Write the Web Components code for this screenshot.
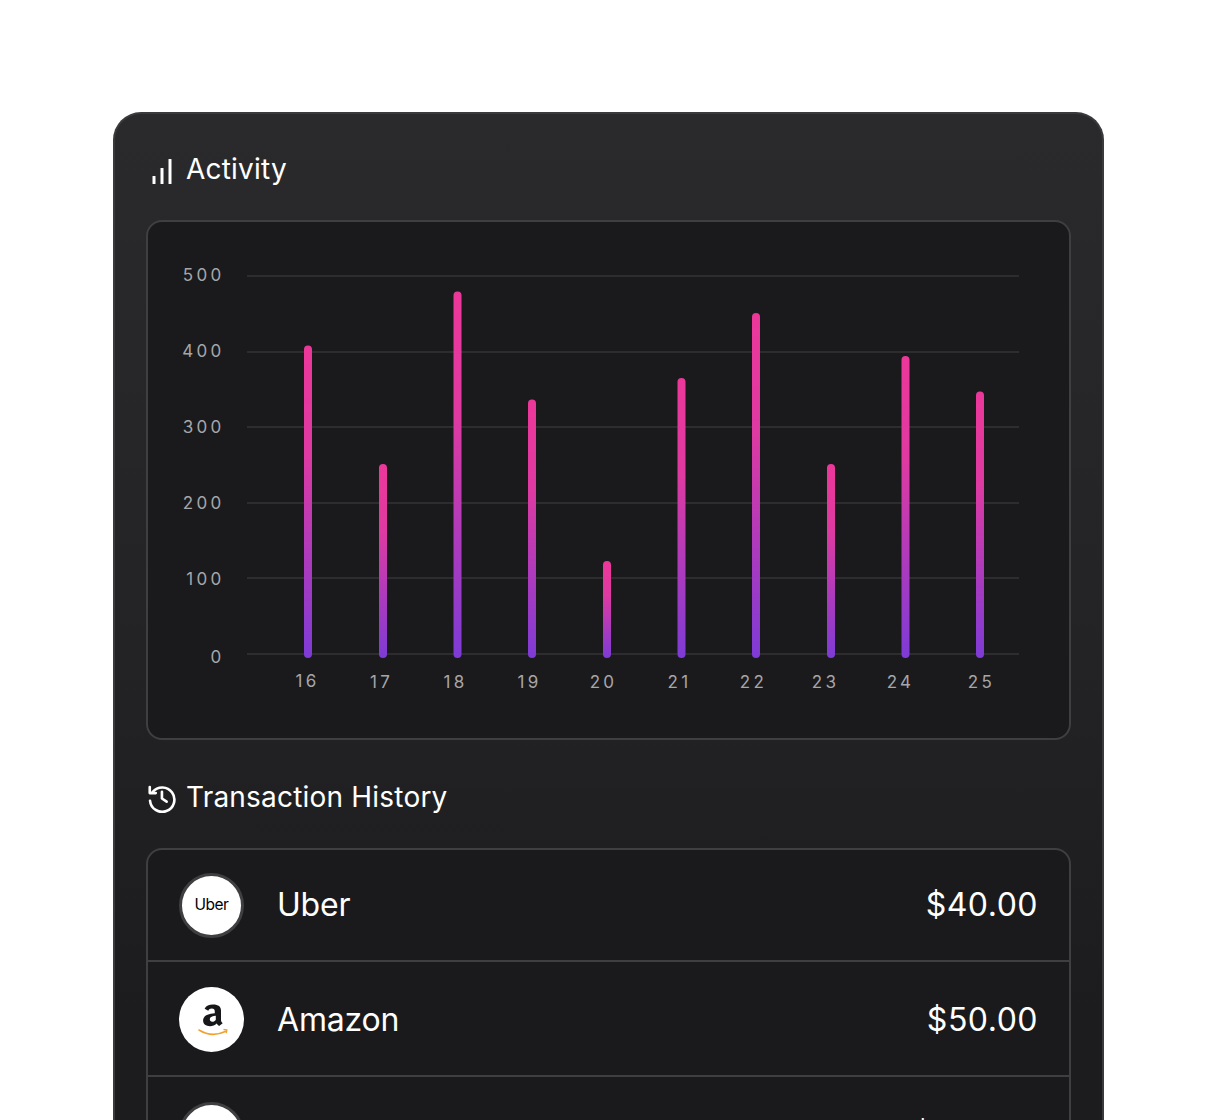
<!DOCTYPE html>
<html lang="en">
<head>
<meta charset="utf-8">
<title>Activity</title>
<style>
html,body{margin:0;background:#fff;height:1120px;overflow:hidden}
body{padding:112px 111px 0 113px;box-sizing:border-box;font-family:Inter,"Liberation Sans",sans-serif;color:#fff}
</style>
</head>
<body>
<dash-card>
  <section-title label="Activity"><svg slot="icon" width="30" height="30" viewBox="0 0 30 30" fill="#fff"><rect x="6.500" y="22" width="3" height="8" rx=".6"/><rect x="14.500" y="14" width="3" height="16" rx=".6"/><rect x="22.500" y="5" width="3" height="25" rx=".6"/></svg></section-title>
  <activity-chart></activity-chart>
  <section-title label="Transaction History" class="second"><svg slot="icon" width="32" height="32" viewBox="0 0 32 32" fill="none" stroke="#fff" stroke-width="2.800" stroke-linecap="round" stroke-linejoin="round"><g transform="translate(1 1)"><path d="M6.200 9.600A13 13 0 1 1 3.300 19"/><path d="M3 4.400v6.400h6.400"/><path d="M16 9.500V16.600l5 3.400"/></g></svg></section-title>
  <tx-list>
    <tx-row class="first" name="Uber" amount="$40.00"><brand-avatar slot="avatar" ring><span class="uber">Uber</span></brand-avatar></tx-row>
    <tx-row name="Amazon" amount="$50.00"><brand-avatar slot="avatar"><svg width="34" height="42" viewBox="0 0 34 42"><path transform="translate(0 4.240) scale(1 .84)" d="M9.600 6.600C11 3 14 1.500 18 1.500c5.600 0 8 2.700 8 7.300v11.400c0 1.500.6 2.400 1.700 3.700l-3.600 3.200c-1.200-1-1.900-2-2.400-2.900-2 2.300-4 3.200-6.700 3.200-4 0-6.900-2.500-6.900-6.800 0-5.500 4.500-8 11.700-8.700V10c0-2.300-1-3.700-3-3.700-1.800 0-2.900 1-3.500 2.700zM20.800 14.800c-3.800.4-6 1.700-6 4.300 0 1.900 1 3 2.600 3 1.400 0 2.400-.7 3.400-2.400z" fill="#17171a"/><path d="M4 31c8 5 18 5.500 27 1.300" fill="none" stroke="#f2a22c" stroke-width="1.600" stroke-linecap="round"/><path d="M28.500 30.500l3.500.3-.9 3.400" fill="none" stroke="#f2a22c" stroke-width="1.300" stroke-linejoin="round"/></svg></brand-avatar></tx-row>
    <tx-row name="" amount="$100.00"><brand-avatar slot="avatar" ring></brand-avatar></tx-row>
  </tx-list>
</dash-card>

<script>
const el=(name,html)=>{
  customElements.define(name,class extends HTMLElement{
    connectedCallback(){
      if(this.shadowRoot)return;
      this.attachShadow({mode:'open'}).innerHTML=typeof html==='function'?html(this):html;
    }
  });
};
el('dash-card',`<style>
:host{display:block;box-sizing:border-box;width:991px;height:1200px;border:2px solid #3a3a3d;border-bottom:0;border-radius:28px 28px 0 0;
background:linear-gradient(180deg,#2a2a2c 0,#232325 45%,#1c1c1e 75%);padding:27px 31px 0 31px}
</style><slot></slot>`);
el('section-title',h=>`<style>
:host{display:flex;align-items:center;height:56px;gap:10px;font:400 28px/36px Inter,"Liberation Sans",sans-serif;color:#fff;letter-spacing:.2px}
.i{display:flex;width:30px;justify-content:flex-start}
</style><span class="i"><slot name="icon"></slot></span><span>${h.getAttribute('label')}</span>`);
el('activity-chart',()=>{
  const tops=[345.500,464,291.500,399.500,561,378,313,464,356,391.500];
  const xs=[308,383,457.500,532,607,681.500,756,831,905.500,980];
  const gl=[276,352,427,503,578,654];
  const yl=['500','400','300','200','100','0'];
  const off=[5,5,6,6,7,9];
  const xl=[['16',307,687],['17',381,688],['18',455,688],['19',529,688],['20',603,688],['21',679,688],['22',753,688],['23',825,688],['24',900,688],['25',981,688]];
  const ox=148,oy=222;
  let s='';
  gl.forEach((y,i)=>{s+=`<rect x="${247-ox}" y="${y-oy-.5}" width="772" height="1" fill="#414144"/>`;
    s+=`<text x="${224.500-ox}" y="${y-oy+off[i]}" text-anchor="end" class="t">${yl[i]}</text>`;});
  xs.forEach((x,i)=>{s+=`<rect x="${x-4-ox}" y="${tops[i]-oy}" width="8" height="${658-tops[i]}" rx="4" fill="url(#g)"/>`;});
  xl.forEach(([t,x,y])=>{s+=`<text x="${x+.5-ox}" y="${y-oy}" text-anchor="middle" class="t">${t}</text>`;});
  return `<style>
:host{display:block;box-sizing:border-box;height:520px;border:2px solid #3f3f42;border-radius:16px;background:#1a1a1c;margin-top:23px;margin-bottom:29px}
svg{display:block}
.t{font:400 17px Inter,"Liberation Sans",sans-serif;fill:#a6a6aa;letter-spacing:3.300px}
</style><svg width="921" height="516" viewBox="0 0 921 516"><defs><linearGradient id="g" x1="0" y1="0" x2="0" y2="1"><stop offset="0" stop-color="#ec379a"/><stop offset=".35" stop-color="#de3aa2"/><stop offset="1" stop-color="#7e3bd6"/></linearGradient></defs>${s}</svg>`;
});
el('tx-list',`<style>
:host{display:block;box-sizing:border-box;border:2px solid #3f3f42;border-radius:16px;background:#1a1a1c;margin-top:23px}
::slotted(tx-row:not(:last-child)){border-bottom:2px solid #3f3f42}
::slotted(tx-row.first){height:112px;padding-top:0}
::slotted(tx-row:last-child){height:112px}
</style><slot></slot>`);
el('tx-row',h=>`<style>
:host{display:flex;align-items:center;box-sizing:border-box;height:115px;padding:2px 31px 0 31px;font:400 32px/40px Inter,"Liberation Sans",sans-serif;color:#fff;letter-spacing:-.2px}
.n{margin-left:33px;flex:1}
.a{letter-spacing:.5px}
</style><slot name="avatar"></slot><span class="n">${h.getAttribute('name')}</span><span class="a">${h.getAttribute('amount')}</span>`);
el('brand-avatar',`<style>
:host{display:flex;align-items:center;justify-content:center;box-sizing:border-box;width:65px;height:65px;border-radius:50%;background:#fff}
:host([ring]){border:3px solid #3f3f42}
::slotted(.uber){font:400 15.500px Inter,"Liberation Sans",sans-serif;color:#000;letter-spacing:-.5px;position:relative;top:-1px}
</style><slot></slot>`);
</script>
</body>
</html>
